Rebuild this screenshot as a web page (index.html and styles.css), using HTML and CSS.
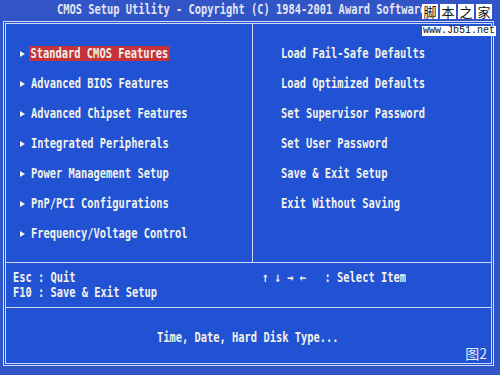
FILE: index.html
```html
<html>
<head>
    <title>CMOS Setup Utility</title>
<link rel="stylesheet" href="styles.css">
</head>
<body>
<div class="screen">
    <div class="title"><span class="t">CMOS Setup Utility - Copyright (C) 1984-2001 Award Software</span></div>
    <div class="frame">
        <div class="menu">
            <ul class="col col-left">
                <li><span class="arrow"></span><span class="t on">Standard CMOS Features</span></li>
                <li><span class="arrow"></span><span class="t">Advanced BIOS Features</span></li>
                <li><span class="arrow"></span><span class="t">Advanced Chipset Features</span></li>
                <li><span class="arrow"></span><span class="t">Integrated Peripherals</span></li>
                <li><span class="arrow"></span><span class="t">Power Management Setup</span></li>
                <li><span class="arrow"></span><span class="t">PnP/PCI Configurations</span></li>
                <li><span class="arrow"></span><span class="t">Frequency/Voltage Control</span></li>
            </ul>
            <ul class="col col-right">
                <li><span class="t">Load Fail-Safe Defaults</span></li>
                <li><span class="t">Load Optimized Defaults</span></li>
                <li><span class="t">Set Supervisor Password</span></li>
                <li><span class="t">Set User Password</span></li>
                <li><span class="t">Save &amp; Exit Setup</span></li>
                <li><span class="t">Exit Without Saving</span></li>
            </ul>
        </div>
        <div class="help">
            <div class="keys keys-left">
                <div class="t">Esc : Quit</div>
                <div class="t">F10 : Save &amp; Exit Setup</div>
            </div>
            <div class="keys">
                <div class="t">↑ ↓ → ←   : Select Item</div>
            </div>
        </div>
        <div class="desc">
            <span class="t">Time, Date, Hard Disk Type...</span>
            <span class="fig">图2</span>
        </div>
    </div>
    <div class="wm">
        <div class="wm-name"><span>脚</span><span>本</span><span>之</span><span>家</span></div>
        <div class="wm-url">www.Jb51.net</div>
    </div>
</div>
</body>
</html>
```

FILE: styles.css
```css
body {
    margin: 0;
    padding: 0;
    background: #3155c6;
    color: #f3f3ea;
    font-family: "DejaVu Sans Mono", "Liberation Mono", monospace;
    font-weight: bold;
    font-size: 13.5px;
    line-height: 15px;
}
.screen {
    position: relative;
    width: 500px;
    height: 375px;
    overflow: hidden;
}
/* bios font is tall and narrow */
.t {
    display: inline-block;
    white-space: pre;
    transform: scaleX(.77);
    transform-origin: 0 50%;
}
.title {
    height: 21px;
    padding: 2px 0 0 57px;
    box-sizing: border-box;
    white-space: nowrap;
    color: #e2e6f4;
}
.frame {
    margin-left: 3px;
    width: 491px;
    height: 345px;
    box-sizing: border-box;
    border: 3px double #d3d9f0;
    background: #2152d3;
    display: flex;
    flex-direction: column;
}
.menu {
    height: 238px;
    display: flex;
}
.col {
    margin: 0;
    padding: 22px 0 0 0;
    list-style: none;
    display: flex;
    flex-direction: column;
    gap: 15px;
}
.col-left {
    width: 247px;
    box-sizing: border-box;
    border-right: 1px solid #d3d9f0;
    padding-left: 14px;
}
.col-right {
    flex: 1;
    padding-left: 28px;
}
.col li {
    display: flex;
    align-items: center;
    height: 15px;
}
.arrow {
    width: 0;
    height: 0;
    border-left: 5px solid #f3f3ea;
    border-top: 3.5px solid transparent;
    border-bottom: 3.5px solid transparent;
    margin-right: 6px;
}
.on {
    background: #c4323c;
    padding: 0 2px;
    margin-left: -2px;
}
.help {
    height: 45px;
    box-sizing: border-box;
    border-top: 1px solid #d3d9f0;
    padding-top: 7px;
    display: flex;
}
.keys-left {
    width: 256px;
    padding-left: 7px;
    box-sizing: border-box;
}
.desc {
    position: relative;
    flex: 1;
    border-top: 1px solid #d3d9f0;
    padding: 22px 0 0 151px;
}
.fig {
    position: absolute;
    right: 4px;
    bottom: 2px;
    font: normal 14px/16px "Noto Sans CJK SC", sans-serif;
    color: #e6e8f2;
}
.wm {
    position: absolute;
    top: 4px;
    left: 422px;
}
.wm-name {
    display: flex;
    gap: 2px;
}
.wm-name span {
    background: #fff;
    color: #111;
    font: normal 13px/15px "Noto Sans CJK SC", sans-serif;
    padding: 0 1.5px;
}
.wm-url {
    display: inline-block;
    margin-top: 7px;
    padding: 0 1px;
    background: #fff;
    color: #111;
    font: normal 10px/10px "Liberation Mono", monospace;
}
```
